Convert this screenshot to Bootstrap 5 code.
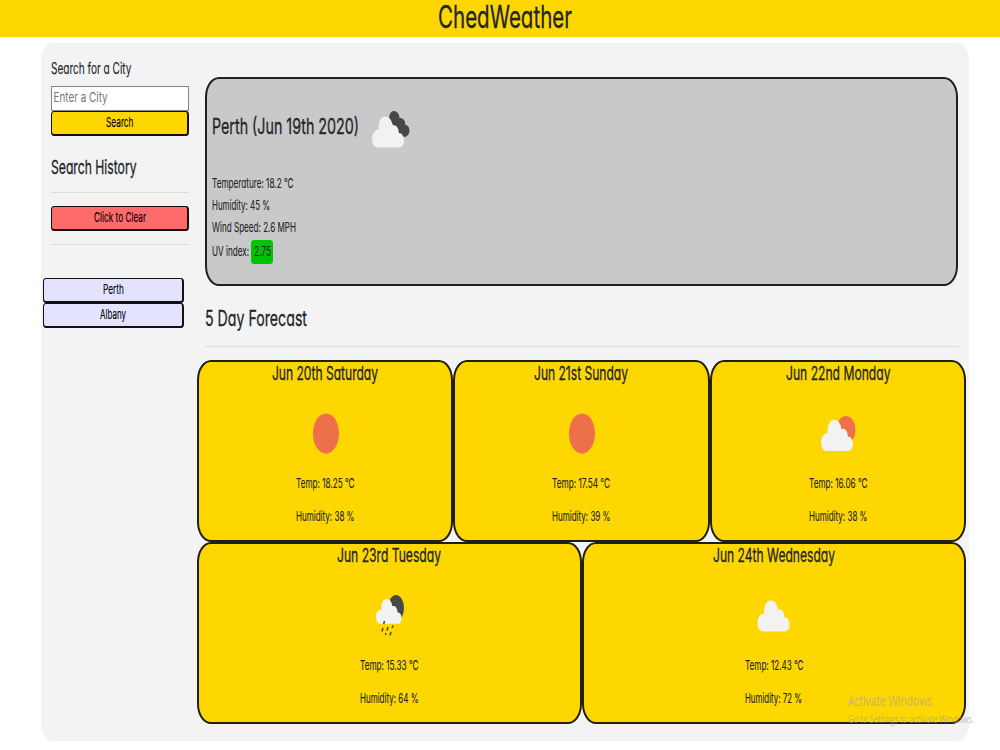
<!DOCTYPE html>
<html lang="en">
<head>
<meta charset="utf-8">
<meta name="viewport" content="width=device-width, initial-scale=1">
<title>ChedWeather</title>
<link href="https://cdn.jsdelivr.net/npm/bootstrap@5.3.0/dist/css/bootstrap.min.css" rel="stylesheet">
<style>
body{font-family:Inter,"Liberation Sans",sans-serif;font-feature-settings:"cv11","ss03";color:#212529;background:#fff;height:750px;overflow:hidden}
.topbar{background:#ffd700;height:37px;padding:0 0 4px 10px}
.fit{display:inline-block;white-space:nowrap;transform-origin:0 50%;text-align:left;-webkit-text-stroke:.12px currentColor}
.t-brand{font-size:31px;line-height:33px}
.t-brand .fit,.t-main .fit,.fit.t-main,.t-sub .fit{-webkit-text-stroke-width:.3px}
.t-main{font-size:22px;line-height:28px}
.t-sub{font-size:19px;line-height:24px}
.t-label{font-size:15.5px;line-height:20px}
.t-text{font-size:13px;line-height:22px}
.panel{background:#f3f3f3;width:928px;height:698px;margin:6px 0 0 41px;border-radius:12px/16px}
.side{width:156px;padding:16px 8px 0 10.4px;flex:none}
.city{height:25px;margin-top:7px;background:#fff;border:1px solid #858585;overflow:hidden}
.city input{display:block;width:150%;height:20px;border:0;outline:0;padding:0 0 0 2px;font-size:13px;transform:scaleX(.76);transform-origin:0 50%}
.city input::placeholder{color:#757575;opacity:1}
.act{display:flex;justify-content:center;align-items:center;width:100%;height:25px;border:1.5px solid #111;border-bottom-width:2px;border-right-width:2px;border-radius:3px/4px;padding:0 0 2px;color:#000;background:#ffd700}
.act.clear{background:#ff6b6b;margin-top:13px}
.act.past{background:#e3e3ff;width:141px}
.rule{height:1px;background:#dcdcdc}
.today{width:753px;height:209px;margin:34px 0 0 8px;background:#c9c9c9;border:2px solid #1d2024;border-radius:14px/20px;padding:22px 0 0 5px}
.uv{background:#00c400;border-radius:3px/4px;width:22px;height:24px;padding:0 2.5px;line-height:23px;margin:2px 0 0 2px}
.day{background:#ffd700;border:2px solid #20200f;border-radius:14px/20px;height:182px;text-align:center}
.day .glyph{height:48px;width:48px;margin:23px auto 0;display:block;position:relative;left:.5px}
.day .t-sub + .glyph + .t-text{margin-top:15px}
.day .t-text + .t-text{margin-top:11px}
.days{width:769px}
.wm{left:848px;top:692px;color:rgba(160,160,160,.62);font-family:"Open Sans",sans-serif;font-feature-settings:normal;z-index:3}
</style>
</head>
<body>
<svg width="0" height="0" class="position-absolute">
<defs>
<path id="cloud" d="M6 31C2.500 31 0 27.500 0 22.500C0 17.500 2.500 13.500 6.700 13C6.300 5.500 8.500 0 13.300 0C17.500 0 20 4 20.300 9C23.800 7.500 26.800 11 26.800 16.500C30 16.500 32 20 32 24C32 28 30 31 27 31Z"/>
<path id="backcloud" d="M17 7C17.500 2.500 19.500 0 22 0C25 0 27.500 3 27.500 7C31 6.500 33.500 9.500 33.300 14C36 14 37.500 16.500 37.500 19.500C37.500 23 35.500 26 32 26L26 22Z"/>
</defs>
</svg>
<header class="topbar text-center t-brand"><span class="fit" data-w="134">ChedWeather</span></header>
<main class="panel d-flex">
<aside class="side">
<div class="t-label"><span class="fit" data-w="80.500">Search for a City</span></div>
<div class="city"><input type="text" placeholder="Enter a City" aria-label="City"></div>
<button class="act t-text"><span class="fit" data-w="27.500">Search</span></button>
<div class="t-sub mt-3 pt-1"><span class="fit" data-w="85.500" style="margin-top:-1px">Search History</span></div>
<div class="rule" style="margin-top:11.500px"></div>
<button class="act clear t-text"><span class="fit" data-w="52">Click to Clear</span></button>
<div class="rule" style="margin-top:13px"></div>
<div style="margin:33px 0 0 -8px">
<button class="act past t-text"><span class="fit" data-w="21">Perth</span></button>
<button class="act past t-text"><span class="fit" data-w="26">Albany</span></button>
</div>
</aside>
<section class="days">
<div class="today">
<div class="d-flex align-items-center" style="height:50px"><span class="fit t-main" data-w="147">Perth (Jun 19th 2020)</span>
<svg width="38" height="37" style="margin:6px 0 0 13px"><use href="#backcloud" fill="#484848"/><use href="#cloud" y="5.500" fill="#f2f2f2"/></svg></div>
<div class="t-text" style="margin-top:21px">
<div><span class="fit" data-w="81.500">Temperature: 18.2 °C</span></div>
<div><span class="fit" data-w="58">Humidity: 45 %</span></div>
<div><span class="fit" data-w="84">Wind Speed: 2.6 MPH</span></div>
<div class="d-flex align-items-center"><span class="fit" data-w="37">UV index:</span><span class="uv"><span class="fit" data-w="17">2.75</span></span></div>
</div>
</div>
<div class="t-main" style="margin:18px 0 0 8px"><span class="fit" data-w="102">5 Day Forecast</span></div>
<div class="rule" style="margin:14px 8px 13px"></div>
<div class="row g-0">
<div class="col-4 day"><div class="t-sub"><span class="fit" data-w="106">Jun 20th Saturday</span></div><svg class="glyph"><ellipse cx="24" cy="24.500" rx="13" ry="20" fill="#ed704b"/></svg><div class="t-text"><span class="fit" data-w="58.500">Temp: 18.25 °C</span></div><div class="t-text"><span class="fit" data-w="58.500">Humidity: 38 %</span></div></div>
<div class="col-4 day"><div class="t-sub"><span class="fit" data-w="94">Jun 21st Sunday</span></div><svg class="glyph"><ellipse cx="24" cy="24.500" rx="13" ry="20" fill="#ed704b"/></svg><div class="t-text"><span class="fit" data-w="58">Temp: 17.54 °C</span></div><div class="t-text"><span class="fit" data-w="58.500">Humidity: 39 %</span></div></div>
<div class="col-4 day"><div class="t-sub"><span class="fit" data-w="104.500">Jun 22nd Monday</span></div><svg class="glyph"><ellipse cx="32" cy="21" rx="9.500" ry="14" fill="#ed704b"/><use href="#cloud" x="7" y="11" fill="#f2f2f2"/></svg><div class="t-text"><span class="fit" data-w="58.500">Temp: 16.06 °C</span></div><div class="t-text"><span class="fit" data-w="58.500">Humidity: 38 %</span></div></div>
<div class="col-6 day"><div class="t-sub"><span class="fit" data-w="104">Jun 23rd Tuesday</span></div><svg class="glyph"><ellipse cx="30" cy="17" rx="8" ry="13" fill="#484848"/><use href="#cloud" transform="translate(10 8) scale(.8)" fill="#f2f2f2"/><path d="M18.500 30l-.8 3M17 37l-1 3.500M22 36l-1 3.500M27 34.500l-.8 2.500M20 42l-.6 2M25 41l-1 3.500" stroke="#484832" stroke-width="1.500"/></svg><div class="t-text"><span class="fit" data-w="58.500">Temp: 15.33 °C</span></div><div class="t-text"><span class="fit" data-w="58.500">Humidity: 64 %</span></div></div>
<div class="col-6 day"><div class="t-sub"><span class="fit" data-w="122">Jun 24th Wednesday</span></div><svg class="glyph"><use href="#cloud" x="7.500" y="9.500" fill="#f2f2f2"/></svg><div class="t-text"><span class="fit" data-w="58.500">Temp: 12.43 °C</span></div><div class="t-text"><span class="fit" data-w="57">Humidity: 72 %</span></div></div>
</div>
</section>
</main>
<div class="wm position-absolute">
<div style="font-size:14px;line-height:18px"><span class="fit" data-w="84">Activate Windows</span></div>
<div style="font-size:11.500px;line-height:18px"><span class="fit" data-w="126">Go to Settings to activate Windows.</span></div>
</div>
<script src="https://cdn.jsdelivr.net/npm/bootstrap@5.3.0/dist/js/bootstrap.bundle.min.js"></script>
<script>
// Condense each label to its set width and give the box that same width.
document.querySelectorAll('.fit').forEach(el => {
  const natural = el.getBoundingClientRect().width, w = +el.dataset.w;
  el.style.transform = `scaleX(${w / natural})`;
  el.style.marginRight = `${w - natural}px`;
});
</script>
</body>
</html>
